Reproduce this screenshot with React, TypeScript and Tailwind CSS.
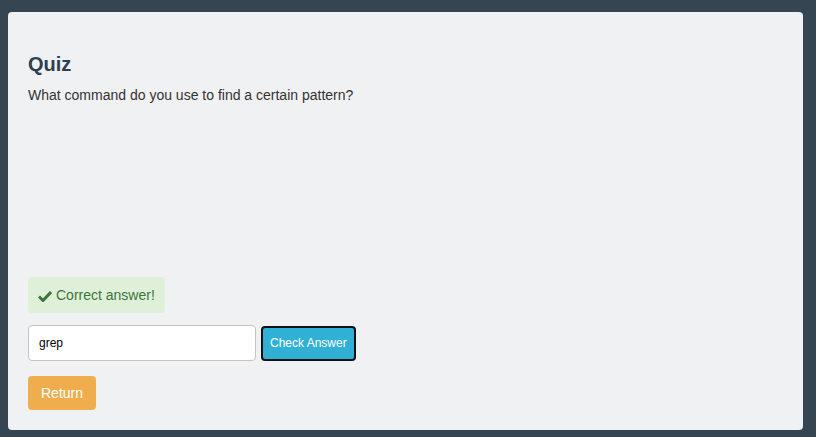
export default function App() {
    return (
        <div className="min-h-[437px] bg-[#354552] pt-3 pl-2 pr-[13px] pb-[7px]" style={{ fontFamily: '"Liberation Sans", Arial, sans-serif' }}>
            <div className="flex h-[418px] flex-col rounded bg-[#f0f1f3] px-5 pb-5 pt-5">
                <h3 className="mt-[21px] mb-[10px] text-[20px] font-bold leading-[22px] text-[#2c3e50]">Quiz</h3>
                <p className="text-[14px] leading-5 text-[#333]">What command do you use to find a certain pattern?</p>
                <div className="flex-1" />
                <div className="mb-3 flex h-9 w-fit items-center gap-1 rounded-sm bg-[#dff0d8] px-[10px] text-[14px] text-[#3c763d]">
                    <svg width="14" height="12" viewBox="0 0 14 12" className="mt-[1px]">
                        <path d="M1 6.5 L5 10.5 L13 2" fill="none" stroke="#3c763d" strokeWidth="3" />
                    </svg>
                    <span>Correct answer!</span>
                </div>
                <div className="mb-[15px] flex items-center gap-[5px]">
                    <input
                        defaultValue="grep"
                        className="h-9 w-[228px] rounded border border-[#c4c4c4] bg-white px-[10px] text-[12px] text-black outline-none"
                    />
                    <button className="h-[35px] rounded border-2 border-[#111] bg-[#31b0d5] px-[7px] text-[12px] text-white">
                        Check Answer
                    </button>
                </div>
                <button className="h-[34px] w-[68px] rounded bg-[#f0ad4e] text-[14px] text-white">Return</button>
            </div>
        </div>
    );
}
